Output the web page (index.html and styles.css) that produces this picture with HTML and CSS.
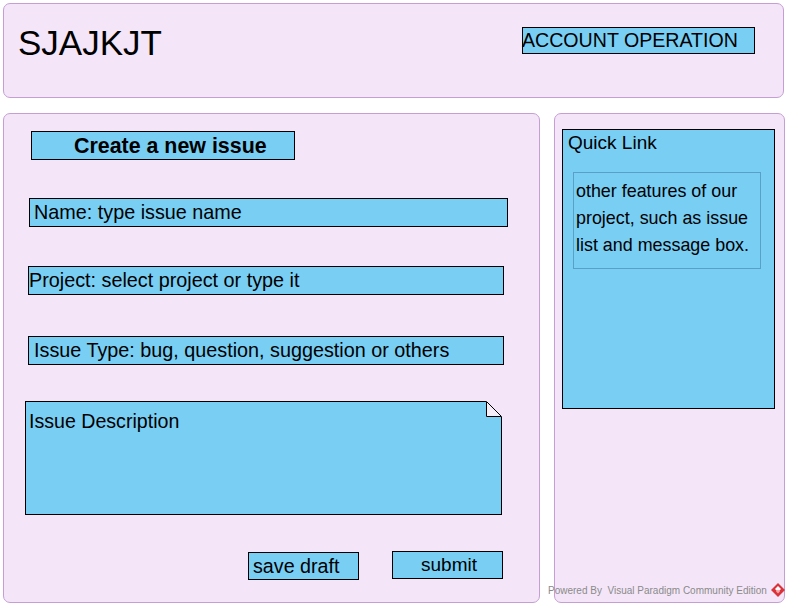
FILE: index.html
```html
<!DOCTYPE html>
<html>
<head>
<meta charset="utf-8">
<link rel="stylesheet" href="styles.css">
</head>
<body>
<div class="page">
  <header class="header panel">
    <div class="brand">SJAJKJT</div>
    <div class="account">ACCOUNT OPERATION</div>
  </header>
  <div class="main">
    <section class="form panel">
      <div class="form-title">Create a new issue</div>
      <div class="field field-name">Name: type issue name</div>
      <div class="field field-project">Project: select project or type it</div>
      <div class="field field-type">Issue Type: bug, question, suggestion or others</div>
      <div class="desc">
        <span class="desc-label">Issue Description</span>
        <svg class="fold" width="16" height="16" viewBox="0 0 16 16">
          <rect x="0" y="0" width="16" height="16" fill="#f4e6f8"/>
          <polygon points="0.5,0.5 0.5,15.5 15.5,15.5" fill="#f6eef9" stroke="#000" stroke-width="1"/>
        </svg>
      </div>
      <div class="actions">
        <div class="btn btn-draft">save draft</div>
        <div class="btn btn-submit">submit</div>
      </div>
    </section>
    <aside class="side panel">
      <div class="quick">
        <div class="quick-title">Quick Link</div>
        <div class="quick-note">other features of our project, such as issue list and message box.</div>
      </div>
    </aside>
  </div>
</div>
<div class="powered">
  <span>Powered By&nbsp; Visual Paradigm Community Edition</span>
  <svg class="vp-logo" width="14" height="14" viewBox="0 0 14 14">
    <polygon points="7,0 14,7 7,14 0,7" fill="#d9323a"/>
    <polygon points="7,3 10,6 7,9 4,6" fill="#fff"/>
    <polygon points="7,6.5 9,8.5 7,10.5 5,8.5" fill="#f6a0a0"/>
  </svg>
</div>
</body>
</html>
```
FILE: styles.css
```css
* { box-sizing: border-box; }
html, body {
  margin: 0;
  padding: 0;
  background: #ffffff;
  font-family: "Liberation Sans", Arial, sans-serif;
  color: #000;
}
.page {
  padding: 3px 0 0 3px;
  display: flex;
  flex-direction: column;
}
.panel {
  background: #f4e6f8;
  border: 1px solid #c59fd3;
  border-radius: 7px;
}
.header {
  width: 781px;
  height: 95px;
  display: flex;
  align-items: flex-start;
  justify-content: space-between;
}
.brand {
  font-size: 35px;
  line-height: 40px;
  margin: 19px 0 0 14px;
}
.account {
  width: 233px;
  height: 27px;
  margin: 23px 28px 0 0;
  background: #79cef4;
  border: 1px solid #000;
  font-size: 19.6px;
  line-height: 24px;
  white-space: nowrap;
  text-indent: -1px;
}
.main {
  margin-top: 15px;
  display: flex;
  gap: 14px;
}
.form {
  width: 537px;
  height: 490px;
  display: flex;
  flex-direction: column;
  align-items: flex-start;
}
.form-title {
  margin: 17px 0 0 27px;
  width: 264px;
  height: 29px;
  background: #79cef4;
  border: 1px solid #000;
  font-weight: bold;
  font-size: 21.4px;
  line-height: 28px;
  padding-left: 42px;
  white-space: nowrap;
}
.field {
  height: 29px;
  background: #79cef4;
  border: 1px solid #000;
  font-size: 19.8px;
  line-height: 26px;
  white-space: nowrap;
}
.field-name { margin: 38px 0 0 25px; width: 479px; padding-left: 4px; }
.field-project { margin: 39px 0 0 24px; width: 476px; padding-left: 0; }
.field-type { margin: 41px 0 0 24px; width: 476px; padding-left: 5px; }
.desc {
  position: relative;
  margin: 36px 0 0 21px;
  width: 477px;
  height: 114px;
  background: #79cef4;
  border: 1px solid #000;
  font-size: 19.6px;
  line-height: 24px;
  padding: 7px 0 0 3px;
}
.fold {
  position: absolute;
  top: -1px;
  right: -1px;
  display: block;
}
.actions {
  margin: 36px 0 0 244px;
  display: flex;
  align-items: flex-start;
  gap: 33px;
}
.btn {
  width: 111px;
  height: 28px;
  background: #79cef4;
  border: 1px solid #000;
  font-size: 19.7px;
  line-height: 26px;
  white-space: nowrap;
}
.btn-draft { margin-top: 1px; padding-left: 4px; }
.btn-submit { text-align: center; padding-left: 3px; font-size: 19px; line-height: 25px; }
.side {
  width: 231px;
  height: 490px;
}
.quick {
  margin: 15px 0 0 7px;
  width: 213px;
  height: 280px;
  background: #79cef4;
  border: 1px solid #000;
  display: flex;
  flex-direction: column;
  align-items: flex-start;
}
.quick-title {
  font-size: 19px;
  line-height: 24px;
  padding: 1px 0 0 5px;
}
.quick-note {
  margin: 17px 0 0 10px;
  width: 188px;
  height: 97px;
  border: 1px solid #5b9fc9;
  font-size: 17.9px;
  line-height: 27px;
  padding: 5px 0 0 2px;
}
.powered {
  position: absolute;
  left: 548px;
  top: 583px;
  display: flex;
  align-items: center;
  gap: 4px;
  font-size: 10px;
  color: #8a8a8a;
  white-space: nowrap;
}
.vp-logo { display: block; }
```
